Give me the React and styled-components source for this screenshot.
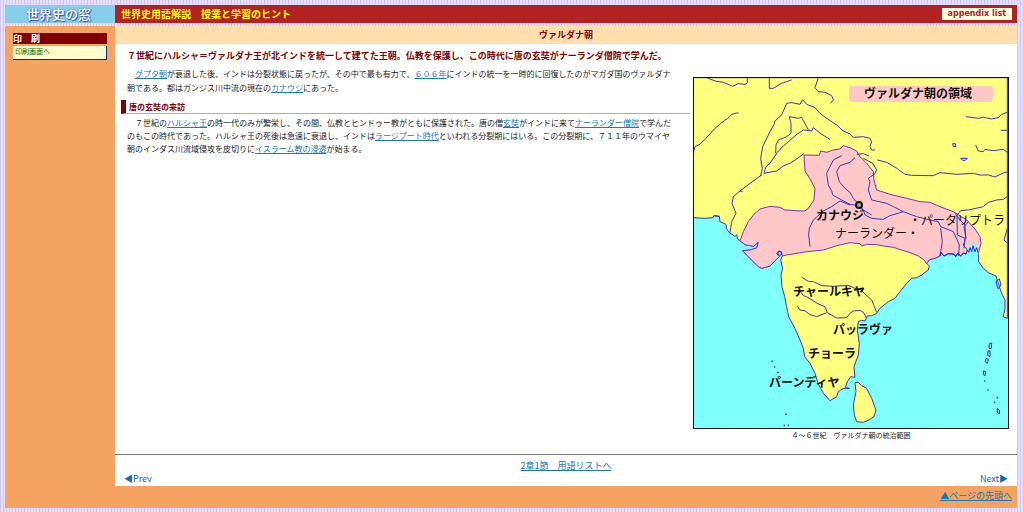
import React from "react";
import styled, { createGlobalStyle } from "styled-components";

const Global = createGlobalStyle`
  * { box-sizing: border-box; }
  body {
    margin: 0;
    background: repeating-linear-gradient(90deg, #cfc8f4 0 1px, #e4e0fa 1px 3px);
    font-family: "Noto Sans CJK JP", sans-serif;
    font-size: 9px;
    line-height: 13px;
    color: #222;
  }
  h1, h2, h3, p, figure, nav { margin: 0; font-size: inherit; }
`;

const Page = styled.div`
  display: flex;
  flex-direction: column;
  padding: 5px 7px 4px 5px;
  min-height: 100vh;
`;
const TopBar = styled.header`
  display: flex;
  align-items: stretch;
  height: 18px;
  margin-bottom: 3px;
`;
const Logo = styled.a`
  width: 110px;
  flex: none;
  padding-right: 3px;
  background: #87ceeb;
  color: #fff;
  font-size: 13px;
  font-weight: 500;
  line-height: 18px;
  text-align: center;
  text-decoration: none;
  text-shadow: 1px 1px 1px #36509a, 0 0 2px #4a70b4;
`;
const Banner = styled.div`
  flex: 1;
  display: flex;
  align-items: center;
  justify-content: space-between;
  padding: 0 5px 0 6px;
  background: #b22222;
`;
const SiteTitle = styled.h2`
  color: #ff0;
  font-size: 10px;
  line-height: 18px;
  font-weight: 700;
`;
const AppendixLink = styled.a`
  padding: 0 6px;
  background: #ffffe0;
  color: #b22222;
  font: bold 8px/12px "DejaVu Sans", sans-serif;
  text-decoration: none;
`;
const Body = styled.div`
  flex: 1;
  display: flex;
  background: #f4a460;
`;
const Sidebar = styled.aside`
  width: 110px;
  flex: none;
  padding: 7px 8px;
`;
const SideTitle = styled.h3`
  height: 11px;
  margin-bottom: 2px;
  background: maroon;
  color: #fff;
  line-height: 11px;
  font-weight: 700;
`;
const PrintLink = styled.a`
  display: block;
  height: 14px;
  padding-left: 2px;
  background: #ffffcc;
  border-right: 1px solid #202080;
  border-bottom: 1px solid #202080;
  color: #006400;
  font-size: 7px;
  line-height: 11px;
  text-decoration: none;
`;
const Main = styled.main`
  flex: 1;
  min-width: 0;
  background: #fff;
`;
const TermTitle = styled.h1`
  background: #ffdead;
  color: maroon;
  font-size: 9px;
  line-height: 18px;
  text-align: center;
`;
const Article = styled.article`
  display: flex;
  justify-content: space-between;
  min-height: 410px;
  padding: 0 8px 0 6px;
`;
const Column = styled.div`
  flex: 1;
  min-width: 0;
  padding-top: 5px;
`;
const Lead = styled.p`
  padding: 0 6px;
  color: maroon;
  font-weight: 700;
  white-space: nowrap;
`;
const Text = styled.p`
  padding: 0 6px;
  margin: ${(p) => (p.$first ? "5px 0 5px" : "2px 0 0")};
  font-size: 8px;
  line-height: ${(p) => (p.$first ? "14px" : "13px")};
  white-space: nowrap;
`;
const Link = styled.a`
  color: #2077b8;
  text-decoration: underline;
  text-underline-offset: 1px;
`;
const Heading = styled.h3`
  height: 14px;
  padding-left: 3px;
  border-left: 5px solid maroon;
  border-bottom: 1px solid #bca8a4;
  color: maroon;
  font-size: 8px;
  line-height: 13px;
`;
const MapFigure = styled.figure`
  width: 316px;
  flex: none;
  margin-left: 3px;
  padding-top: 33px;
  text-align: center;
`;
const MapSvg = styled.svg`
  display: block;
  width: 100%;
  font-family: "Noto Sans CJK JP", sans-serif;
`;
const Caption = styled.figcaption`
  font-size: 7px;
  line-height: 13px;
`;
const EndNav = styled.nav`
  border-top: 1px solid #777;
  padding: 4px 9px 1px;
  text-align: center;
`;
const ListLink = styled(Link)`
  font-size: 9px;
  line-height: 12px;
`;
const Pager = styled.div`
  display: flex;
  justify-content: space-between;
`;
const PageLink = styled.a`
  color: #1468b4;
  text-decoration: none;
  font: 9px/13px "Noto Sans CJK JP", sans-serif;
`;
const Footer = styled.footer`
  height: 22px;
  padding-right: 5px;
  background: #f4a460;
  text-align: right;
  line-height: 20px;
`;

const land = "M10 428L45 430 68 428 72 422 88 424 90 440 108 448 110 462 120 475 130 480 135 485 140 479 143 492 150 497 165 509 190 514 205 502 200 519 180 525 158 527 170 540 190 560 205 575 215 580 240 573 255 557 268 545 260 535 270 528 278 540 272 555 278 580 273 600 276 635 284 665 290 695 296 725 315 760 330 795 340 820 344 845 360 865 375 895 384 925 400 955 420 977 440 965 445 950 460 940 478 940 466 938 472 920 482 905 495 907 492 875 505 840 508 805 502 765 505 740 515 736 525 738 532 723 545 722 560 715 570 700 595 680 615 670 630 650 650 625 665 610 680 608 695 600 715 585 718 573 710 565 720 553 735 550 750 543 753 532 762 543 775 536 790 537 798 544 803 534 812 543 820 534 828 537 832 525 836 532 840 518 845 530 849 512 855 530 860 518 865 535 866 560 880 580 895 593 918 603 925 625 935 655 945 675 945 700 940 725 952 730V8H10z";
const empire = "M150 497L160 470 175 440 192 418 210 402 240 394 270 397 285 405 315 407 345 408 355 400 372 375 375 340 362 315 345 288 342 240 388 241 392 228 410 232 430 225 450 222 460 212 480 218 500 228 510 245 530 265 550 290 552 315 560 345 600 358 650 370 690 380 720 382 750 395 790 410 830 435 855 462 870 485 873 505 865 535 860 518 855 530 849 512 845 530 840 518 836 532 828 537 820 534 812 543 803 534 798 544 790 537 775 536 762 543 753 532 750 543 735 550 720 553 710 565 700 553 685 543 660 533 610 517 580 513 560 509 530 508 515 513 510 506 480 503 440 512 400 525 350 530 290 540 278 543 270 528 260 535 268 545 255 557 240 573 215 580 205 575 190 560 170 540 158 527 180 525 200 519 205 502 190 514 165 509z";
const sriLanka = "M495 923L505 922 515 932 530 940 545 970 558 1005 552 1025 538 1034 520 1042 500 1040 493 1020 490 990 498 950z";
const rivers = [
  "50 8 75 18 100 22 128 34 145 26 165 28 172 24 172 8",
  "238 8 238 40 250 40 275 25 305 15",
  "385 8 375 38 385 50 405 52 425 62 430 75 422 85",
  "10 232 15 215 30 208 48 190 75 160 105 135 112 132 125 118 145 113",
  "212 303 217 280 212 250 218 215 228 195 240 170 252 148 255 138 275 120 290 85 305 83 330 88 338 74 350 88 375 98 390 115 410 130 440 150 460 168 480 177",
  "222 295 228 275 240 265 262 232 280 213 290 205 318 180 340 165 365 168 370 158 395 178 420 193",
  "257 235 258 210 265 195 290 185 303 175 303 145 298 125 325 130 335 127 350 155 357 168",
  "222 295 260 288 280 273 300 265 320 252 342 236",
  "215 300 180 325 150 348 130 365 126 385 138 415 125 440 120 475",
  "150 348 158 350",
  "455 242 430 255 420 275 410 295 415 330 425 348 428 360 455 375 480 388 495 390 520 405 525 420 545 430 580 433 600 422 640 410",
  "495 248 480 262 450 272 440 290 448 320 465 340 480 352 490 370 520 405 545 420",
  "480 390 450 378 425 395 400 408 370 435 358 460 356 480 360 515",
  "480 178 490 187 520 185 540 190 545 200 540 215 545 225 555 225",
  "500 238 520 236 537 243",
  "520 250 548 265 560 285 553 298 535 310 540 320 535 345 545 375 590 385 610 395 640 410 680 425 720 435 745 440 752 455 760 458 790 470 808 510 806 543",
  "562 255 590 262 620 280 645 298 665 301 730 302 750 293 800 298 850 295 870 300 895 300 915 306 940 294 952 291",
  "828 125 865 130 880 127 905 132 925 128 935 118 952 112",
  "932 166 952 166",
  "857 210 865 228 880 230 885 223 910 227 940 223 952 232",
  "952 365 940 373 920 375 895 382 880 395 835 405 812 407 801 420 802 480 825 490 822 520",
  "795 415 812 437 825 450 827 490 820 510 832 525",
  "835 440 822 455 828 490",
  "752 460 757 500 750 543",
  "952 460 942 495 952 505",
  "335 607 355 619 370 620 395 632 430 634 475 631 500 642 510 643 525 657 545 675 552 692 560 712",
  "330 647 340 662 350 665 385 687 405 695 412 713 440 729 470 728 480 715 490 708 510 706 520 712 530 730",
  "322 693 330 705 345 707 360 719 380 725 410 713",
];
const islets = "M788 206h8l2 8-8 0zM812 250h20l-6 6h-8zM898 806l7-2-1 16-7 0zM894 828l6 0 0 17-7-4zM888 850l7 3-3 12-6-4zM881 888l6 2-2 12-5-3zM922 1000l6 6 0 11-6-6zM918 620l10-8 5 18-8 12-4-10z";
const atolls = "M246 859h0M254 876h0M264 892h0M288 1018h0M283 1051h0M295 1051h0M884 918h0M894 945h0M914 982h0M922 968h0";

const labels = [
  { name: "カナウジ", x: 816, y: 220, weight: 700 },
  { name: "ナーランダー・", x: 835, y: 238, weight: 400 },
  { name: "・パータリプトラ", x: 909, y: 225, weight: 400 },
  { name: "チャールキヤ", x: 793, y: 296, weight: 700 },
  { name: "パッラヴァ", x: 833, y: 334, weight: 700 },
  { name: "チョーラ", x: 808, y: 358, weight: 700 },
  { name: "パーンディヤ", x: 769, y: 387, weight: 700 },
];

function TerritoryMap() {
  return (
    <MapSvg viewBox="693 77 316 352" role="img" aria-label="ヴァルダナ朝の領域">
      <path fill="#80ffff" d="M693 77h316v352h-316z" />
      <g transform="translate(690 75) scale(0.33333)" strokeWidth="3" strokeLinejoin="round" stroke="#3c34c0">
        <path fill="#ffff80" d={land} />
        <path fill="#ffc8c8" stroke="#8a28c8" d={empire} />
        <path fill="#ffff80" d={sriLanka} />
        <path fill="#80ffff" stroke="none" d="M828 537l4-12 8-14 10-5 12 10 5 20z" />
        <g fill="none">
          {rivers.map((points) => <polyline key={points} points={points} />)}
          <path stroke="#2424e0" d="M750 543l3-11 9 11 13-7 15 1 8 7 5-10 9 9 8-9 8 3 4-12 4 7 4-14 5 12 4-18 6 18 5-12 5 17M68 428l4-6 16 2" />
          <path stroke="#2424e0" d={islets} />
          <path stroke="#2424e0" strokeWidth="5" strokeLinecap="round" d={atolls} />
          <path stroke="#2424e0" d="M262 533l4-5 8 2 2 8-8 3z" />
        </g>
      </g>
      <circle cx="859" cy="205" r="3" fill="#aaa" stroke="#111" strokeWidth="2" />
      <rect x="849" y="86" width="144" height="16" rx="3" fill="#ffc8c8" />
      <text x="864" y="98" fontSize="12" fontWeight="700" fill="#111">ヴァルダナ朝の領域</text>
      {labels.map(({ name, x, y, weight }) => (
        <text key={name} x={x} y={y} fontSize="12" fontWeight={weight} fill="#111">{name}</text>
      ))}
      <rect x="693.5" y="77.5" width="315" height="351" fill="none" stroke="#111" />
    </MapSvg>
  );
}

export default function App() {
  return (
    <Page>
      <Global />
      <TopBar>
        <Logo href="#">世界史の窓</Logo>
        <Banner>
          <SiteTitle>世界史用語解説　授業と学習のヒント</SiteTitle>
          <AppendixLink href="#">appendix list</AppendixLink>
        </Banner>
      </TopBar>
      <Body>
        <Sidebar>
          <SideTitle>印　刷</SideTitle>
          <PrintLink href="#">印刷画面へ</PrintLink>
        </Sidebar>
        <Main>
          <TermTitle>ヴァルダナ朝</TermTitle>
          <Article>
            <Column>
              <Lead>７世紀にハルシャ＝ヴァルダナ王が北インドを統一して建てた王朝。仏教を保護し、この時代に唐の玄奘がナーランダ僧院で学んだ。</Lead>
              <Text $first>
                {"　"}<Link href="#">グプタ朝</Link>が衰退した後、インドは分裂状態に戻ったが、その中で最も有力で、<Link href="#">６０６年</Link>にインドの統一を一時的に回復したのがマガダ国のヴァルダナ<br />
                朝である。都はガンジス川中流の現在の<Link href="#">カナウジ</Link>にあった。
              </Text>
              <Heading>唐の玄奘の来訪</Heading>
              <Text>
                {"　７世紀の"}<Link href="#">ハルシャ王</Link>の時一代のみが繁栄し、その間、仏教とヒンドゥー教がともに保護された。唐の僧<Link href="#">玄奘</Link>がインドに来て<Link href="#">ナーランダー僧院</Link>で学んだ<br />
                のもこの時代であった。ハルシャ王の死後は急速に衰退し、インドは<Link href="#">ラージプート時代</Link>といわれる分裂期にはいる。この分裂期に、７１１年のウマイヤ<br />
                朝のインダス川流域侵攻を皮切りに<Link href="#">イスラーム教の浸透</Link>が始まる。
              </Text>
            </Column>
            <MapFigure>
              <TerritoryMap />
              <Caption>４～６世紀　ヴァルダナ朝の統治範囲</Caption>
            </MapFigure>
          </Article>
          <EndNav>
            <ListLink href="#">2章1節　用語リストへ</ListLink>
            <Pager>
              <PageLink href="#">◀Prev</PageLink>
              <PageLink href="#">Next▶</PageLink>
            </Pager>
          </EndNav>
        </Main>
      </Body>
      <Footer><Link href="#">▲ページの先頭へ</Link></Footer>
    </Page>
  );
}
